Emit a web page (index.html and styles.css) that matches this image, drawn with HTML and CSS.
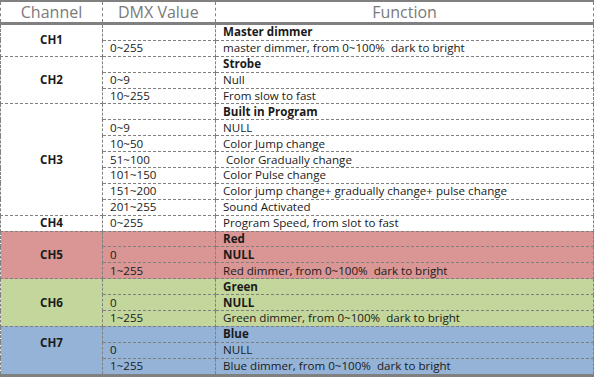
FILE: index.html
```html
<!DOCTYPE html>
<html>
<head>
<meta charset="utf-8">
<link rel="stylesheet" href="styles.css">
</head>
<body>
<table class="dmx">
  <colgroup>
    <col class="c1"><col class="c2"><col class="c3">
  </colgroup>
  <thead>
    <tr class="head">
      <th class="h-ch">Channel</th>
      <th class="h-dmx">DMX Value</th>
      <th class="h-fn">Function</th>
    </tr>
  </thead>
  <tbody>
    <tr><td class="ch" rowspan="2">CH1</td><td></td><td class="b">Master dimmer</td></tr>
    <tr><td>0~255</td><td>master dimmer, from 0~100%&nbsp; dark to bright</td></tr>

    <tr><td class="ch" rowspan="3">CH2</td><td></td><td class="b">Strobe</td></tr>
    <tr><td>0~9</td><td>Null</td></tr>
    <tr><td>10~255</td><td>From slow to fast</td></tr>

    <tr><td class="ch" rowspan="7">CH3</td><td></td><td class="b">Built in Program</td></tr>
    <tr><td>0~9</td><td>NULL</td></tr>
    <tr><td>10~50</td><td>Color Jump change</td></tr>
    <tr><td>51~100</td><td>&nbsp;Color Gradually change</td></tr>
    <tr><td>101~150</td><td>Color Pulse change</td></tr>
    <tr><td>151~200</td><td>Color jump change+ gradually change+ pulse change</td></tr>
    <tr><td>201~255</td><td>Sound Activated</td></tr>

    <tr><td class="ch">CH4</td><td>0~255</td><td>Program Speed, from slot to fast</td></tr>

    <tr class="red"><td class="ch" rowspan="3">CH5</td><td></td><td class="b">Red</td></tr>
    <tr class="red"><td>0</td><td class="b">NULL</td></tr>
    <tr class="red"><td>1~255</td><td>Red dimmer, from 0~100%&nbsp; dark to bright</td></tr>

    <tr class="green"><td class="ch" rowspan="3">CH6</td><td></td><td class="b">Green</td></tr>
    <tr class="green"><td>0</td><td class="b">NULL</td></tr>
    <tr class="green"><td>1~255</td><td>Green dimmer, from 0~100%&nbsp; dark to bright</td></tr>

    <tr class="blue"><td class="ch ch-high" rowspan="3">CH7</td><td></td><td class="b">Blue</td></tr>
    <tr class="blue"><td>0</td><td>NULL</td></tr>
    <tr class="blue last"><td>1~255</td><td>Blue dimmer, from 0~100%&nbsp; dark to bright</td></tr>
  </tbody>
</table>
</body>
</html>
```

FILE: styles.css
```css
html, body {
  margin: 0;
  padding: 0;
  background: #ffffff;
}

.dmx {
  border-collapse: collapse;
  table-layout: fixed;
  width: 593px;
  font-family: "Open Sans", "Liberation Sans", sans-serif;
  font-size: 11.6px;
  color: #1a1a1a;
  border-top: 2px solid #808080;
  border-bottom: 3px solid #808080;
}

.c1 { width: 102px; }
.c2 { width: 113px; }
.c3 { width: 378px; }

.head th {
  height: 20px;
  padding: 0;
  font-size: 16px;
  font-weight: normal;
  color: #7a7a7a;
  border-left: 1px dashed #808080;
  border-right: 1px dashed #808080;
  border-bottom: 3px solid #808080;
  line-height: 18px;
}

.h-ch { text-align: center; }
.h-dmx { text-align: left; padding-left: 15px !important; }
.h-fn { text-align: center; }

.dmx td {
  height: 14.9px;
  padding: 0 0 0 7px;
  border: 1px dashed #808080;
  line-height: 14px;
  white-space: nowrap;
  vertical-align: middle;
}

.dmx td.ch {
  padding: 0;
  text-align: center;
  font-weight: bold;
}

.dmx td.ch-high {
  padding-bottom: 14px;
}

.b { font-weight: bold; }

.red td { background: #d99694; }
.green td { background: #c3d69b; }
.blue td { background: #95b3d7; }
```
